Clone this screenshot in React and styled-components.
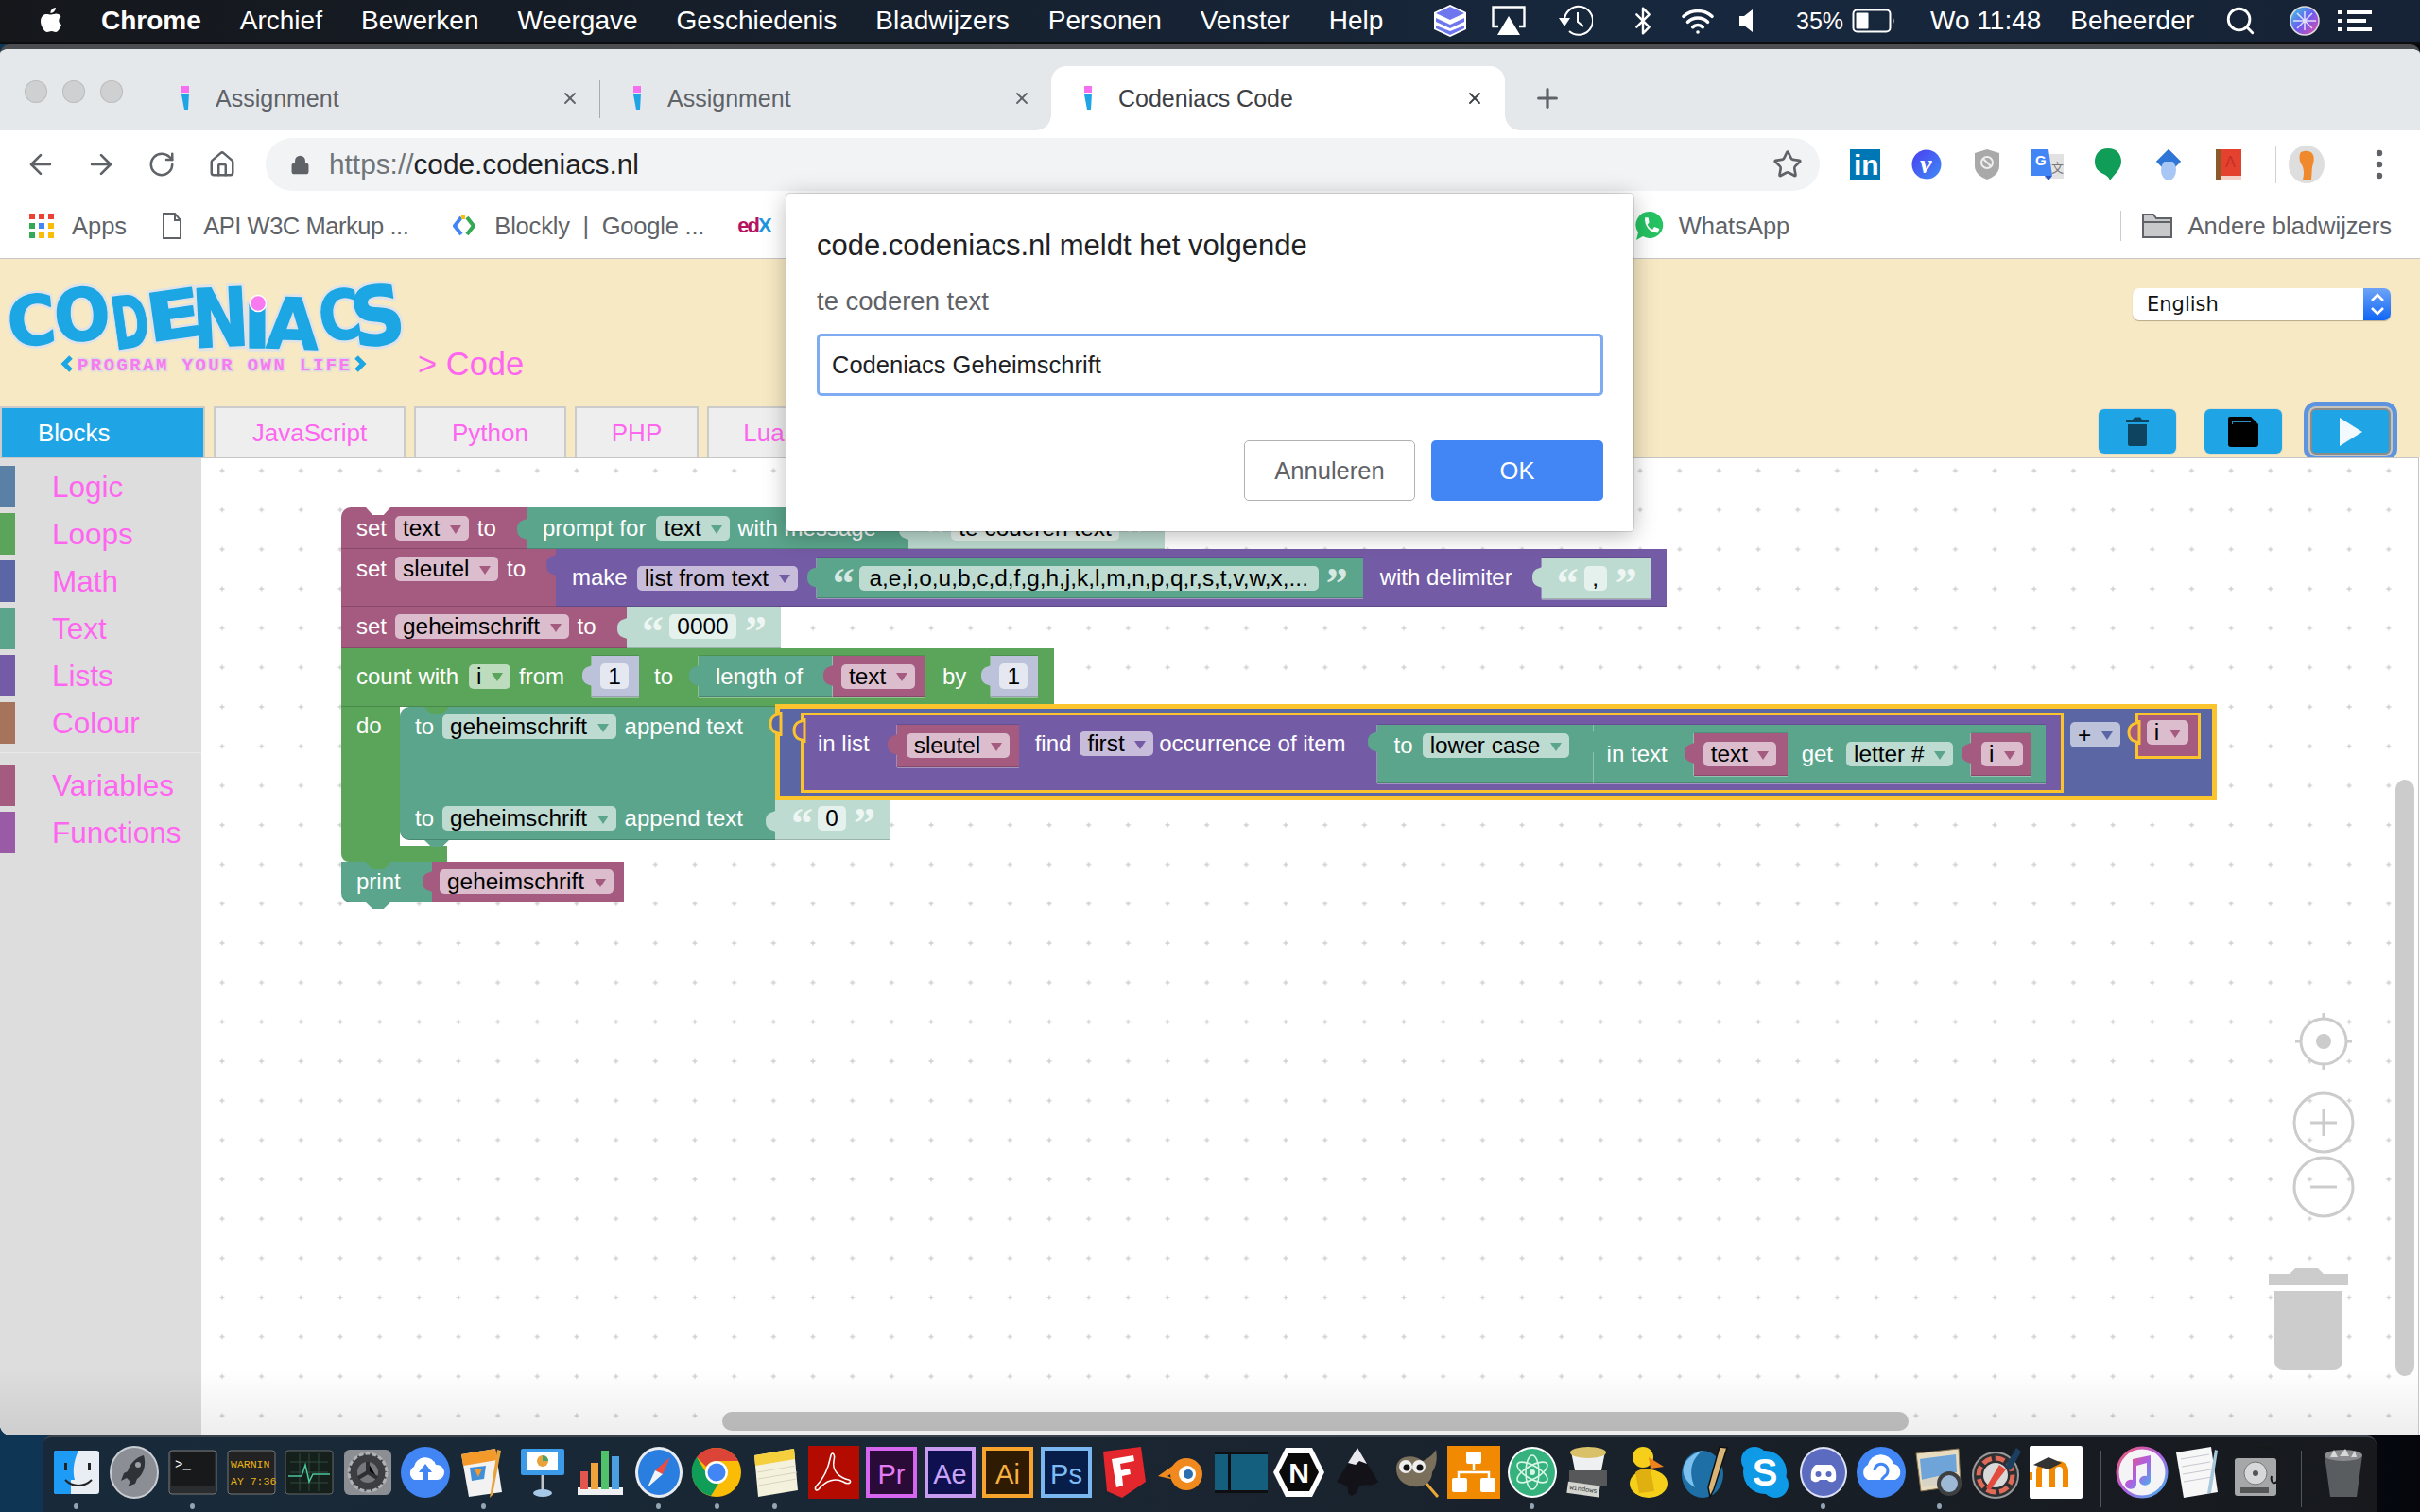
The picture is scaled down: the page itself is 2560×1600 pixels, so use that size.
import React from 'react';
import styled, { createGlobalStyle } from 'styled-components';
import { ArrowLeft, ArrowRight, RotateCw, Home, Lock, Star, Plus, X, Search, Bluetooth, Wifi } from 'lucide-react';

const PINK = '#a55b80';
const PINK_LIGHT = '#dbbdcd';
const TEXTC = '#5ba58c';
const TEXT_LIGHT = '#bddbd0';
const PURPLE = '#745ba5';
const PURPLE_LIGHT = '#c7bddb';
const LOOP = '#5ba55b';
const LOOP_LIGHT = '#bddbbd';
const MATH = '#5b67a5';
const MATH_LIGHT = '#bdc2db';
const YELLOW = '#fcc42c';
const ACCENT = '#ff66f0';
const SKY = '#1fa5e6';

const GlobalStyle = createGlobalStyle`
  html, body { margin: 0; width: 2560px; height: 1600px; overflow: hidden; }
  body { font-family: "Liberation Sans", Arial, sans-serif; }
`;

const Screen = styled.div`
  position: relative;
  width: 2560px;
  height: 1600px;
  display: flex;
  flex-direction: column;
  overflow: hidden;
  background: linear-gradient(to right, #0f3555, #10202f 50%, #05070d);
`;

/* mac menu bar */
const MenuBar = styled.div`
  flex: none;
  height: 44px;
  border-bottom: 3px solid #0c0d0f;
  display: flex;
  align-items: center;
  color: #fff;
  font-size: 28px;
  background: linear-gradient(to right, #15171b, #17283e 70%, #162235);
`;
const MenuLeft = styled.div`
  display: flex;
  align-items: center;
  gap: 41px;
  padding-left: 42px;
`;
const MenuItem = styled.span`
  font-weight: ${p => (p.$bold ? 700 : 400)};
  margin-left: ${p => p.$ml || 0}px;
  font-size: ${p => p.$size || 28}px;
  white-space: nowrap;
`;
const MenuRight = styled.div`
  margin-left: auto;
  display: flex;
  align-items: center;
  height: 44px;
  width: 1058px;
`;
const MenuSlot = styled.div`
  flex: none;
  display: flex;
  align-items: center;
  justify-content: center;
  width: ${p => p.$w}px;
  margin-left: ${p => p.$ml || 0}px;
`;

/* chrome window */
const Window = styled.div`
  flex: 1;
  min-height: 0;
  display: flex;
  flex-direction: column;
  border-top: 5px solid #4b4d50;
  border-radius: 10px 10px 0 12px;
  overflow: hidden;
  background: #fff;
`;
const TabStrip = styled.div`
  flex: none;
  height: 86px;
  background: #e5e8eb;
  display: flex;
  align-items: flex-end;
`;
const Lights = styled.div`
  display: flex;
  gap: 16px;
  padding-left: 26px;
  width: 131px;
  align-self: flex-start;
  margin-top: 33px;
`;
const Light = styled.span`
  width: 24px;
  height: 24px;
  border-radius: 50%;
  background: #cfd0d2;
  box-shadow: inset 0 0 0 1px #bcbdbf;
`;
const ChromeTab = styled.div`
  position: relative;
  box-sizing: border-box;
  flex: none;
  display: flex;
  align-items: center;
  height: 68px;
  width: ${p => p.$w}px;
  padding: 0 ${p => p.$pr}px 0 34px;
  font-size: 25px;
  color: ${p => (p.$active ? '#3c4043' : '#5f6368')};
  background: ${p => (p.$active ? '#fff' : 'transparent')};
  border-radius: 16px 16px 0 0;
  svg.close { margin-left: auto; }
  ${p => p.$sep && `
    &::after { content: ''; position: absolute; right: 0; top: 15px; height: 40px; width: 1px; background: #a9acaf; }
  `}
  ${p => p.$active && `
    &::before, &::after { content: ''; position: absolute; bottom: 0; width: 16px; height: 16px; }
    &::before { left: -16px; background: radial-gradient(circle at 0 0, transparent 15.5px, #fff 16px); }
    &::after { right: -16px; background: radial-gradient(circle at 100% 0, transparent 15.5px, #fff 16px); }
  `}
`;
const TabTitle = styled.span`
  margin-left: 27px;
  white-space: nowrap;
`;
const NewTab = styled.div`
  margin: 0 0 17px 29px;
  height: 34px;
  display: flex;
  align-items: center;
  color: #5f6368;
`;

const Toolbar = styled.div`
  flex: none;
  height: 67px;
  display: flex;
  align-items: flex-start;
  padding-left: 11px;
  background: #fff;
  color: #5f6368;
`;
const NavSlot = styled.div`
  flex: none;
  width: ${p => p.$w || 64}px;
  height: 56px;
  margin: 8px 0 0 ${p => p.$ml || 0}px;
  display: flex;
  align-items: center;
  justify-content: center;
`;
const Omnibox = styled.div`
  flex: none;
  box-sizing: border-box;
  width: 1644px;
  height: 56px;
  margin: 8px 0 0 14px;
  padding: 0 18px 0 26px;
  background: #f1f3f4;
  border-radius: 28px;
  display: flex;
  align-items: center;
  gap: 20px;
  font-size: 29.8px;
`;
const Url = styled.span`
  color: #202124;
  span { color: #70757a; }
`;
const ToolDivider = styled.span`
  flex: none;
  width: 1px;
  height: 40px;
  margin: 16px 0 0 17px;
  background: #d0d2d4;
`;

const Bookmarks = styled.div`
  flex: none;
  height: 68px;
  box-sizing: content-box;
  border-bottom: 1px solid #c6c6c6;
  display: flex;
  align-items: center;
  padding: 0 30px 0 31px;
  font-size: 25.5px;
  color: #5f6368;
  background: #fff;
`;
const Mark = styled.span`
  flex: none;
  white-space: pre;
  margin-left: ${p => p.$ml || 0}px;
  letter-spacing: ${p => p.$ls || 0}px;
  display: flex;
  align-items: center;
`;
const EdxMark = styled(Mark)`
  font-weight: 700;
  font-size: 22px;
  span:first-child { color: #b5135f; }
  span:last-child { color: #1b95e0; }
`;
const MarkDivider = styled.span`
  flex: none;
  width: 1px;
  height: 32px;
  background: #ccc;
  margin-left: auto;
`;

/* site header */
const SiteHeader = styled.div`
  flex: none;
  height: 210px;
  background: #f7e9c4;
  display: flex;
  flex-direction: column;
`;
const HeaderTop = styled.div`
  height: 156px;
  display: flex;
  align-items: flex-start;
`;
const Logo = styled.svg`
  flex: none;
  margin: 8px 0 0 8px;
  overflow: visible;
`;
const Crumb = styled.div`
  margin: 89px 0 0 4px;
  font-size: 34.5px;
  line-height: 44px;
  color: ${ACCENT};
`;
const Select = styled.div`
  box-sizing: border-box;
  margin: 31px 31px 0 auto;
  width: 273px;
  height: 34px;
  display: flex;
  align-items: center;
  justify-content: space-between;
  padding-left: 15px;
  background: #fff;
  border-radius: 7px;
  box-shadow: 0 1px 1px #b5aa8c;
  font-family: "DejaVu Sans", sans-serif;
  font-size: 21px;
  color: #111;
  overflow: hidden;
`;
const SelectArrow = styled.div`
  width: 29px;
  height: 34px;
  display: flex;
  align-items: center;
  justify-content: center;
  background: linear-gradient(#6ea4f7, #0f66f5);
`;
const TabRow = styled.div`
  height: 54px;
  display: flex;
  gap: 9px;
`;
const PageTab = styled.div`
  box-sizing: border-box;
  flex: none;
  width: ${p => p.$w}px;
  height: 54px;
  display: flex;
  align-items: center;
  justify-content: ${p => (p.$active ? 'flex-start' : 'center')};
  padding-left: ${p => (p.$active ? 38 : 0)}px;
  font-size: 26px;
  border: 2px solid #cbcbcb;
  border-bottom: none;
  color: ${p => (p.$active ? '#fff' : ACCENT)};
  background: ${p => (p.$active ? SKY : '#eeeeee')};
`;
const Actions = styled.div`
  margin: 3px 31px 0 auto;
  display: flex;
  gap: 30px;
`;
const ActionButton = styled.div`
  box-sizing: border-box;
  width: ${p => p.$w || 82}px;
  height: ${p => (p.$focus ? 49 : 47)}px;
  margin-top: ${p => (p.$focus ? -1 : 0)}px;
  display: flex;
  align-items: center;
  justify-content: center;
  background: ${SKY};
  border-radius: 6px;
  border: ${p => (p.$focus ? '2px solid #8b8b8b' : 'none')};
  box-shadow: ${p => (p.$focus ? '0 0 0 2px #c6c6c0, 0 0 0 7px #5e93e0' : '0 0 0 1px #e4dcc8')};
`;

/* blockly workspace */
const Workspace = styled.div`
  position: relative;
  flex: 1;
  min-height: 0;
  display: flex;
  background: #fff;
  border-top: 1px solid #c6c6c6;
  border-right: 1px solid #c4c4c4;
  margin-right: 1px;
  overflow: hidden;
  &::after {
    content: '';
    position: absolute;
    left: 0;
    right: 0;
    bottom: 0;
    height: 70px;
    background: linear-gradient(rgba(0, 0, 0, 0), rgba(0, 0, 0, 0.07));
    pointer-events: none;
    z-index: 6;
  }
`;
const GridLayer = styled.svg`
  position: absolute;
  inset: 0;
  width: 100%;
  height: 100%;
`;
const Flyout = styled.div`
  position: relative;
  flex: none;
  width: 213px;
  padding-top: 8px;
  background: #dddddd;
  z-index: 1;
`;
const Category = styled.div`
  height: 44px;
  margin-bottom: 6px;
  display: flex;
  align-items: center;
  font-size: 31.5px;
  color: ${ACCENT};
  &::before {
    content: '';
    width: 16px;
    height: 44px;
    margin-right: 39px;
    background: ${p => p.$color};
  }
`;
const CategorySep = styled.div`
  height: 1px;
  margin: 9px 0 12px 0;
  background: #e8e8e8;
`;

const ThumbV = styled.div`
  position: absolute;
  left: 2534px;
  top: 340px;
  width: 20px;
  height: 631px;
  border-radius: 10px;
  background: #cccccc;
`;
const ThumbH = styled.div`
  position: absolute;
  left: 764px;
  top: 1009px;
  width: 1255px;
  height: 20px;
  border-radius: 10px;
  background: #c4c4c4;
`;
const Controls = styled.svg`
  position: absolute;
  left: 2395px;
  top: 580px;
`;

/* block stack: sits on the free canvas */
const Canvas = styled.div`
  position: absolute;
  left: 361px;
  top: 52px;
  display: flex;
  flex-direction: column;
  align-items: flex-start;
  z-index: 2;
`;
const Row = styled.div`
  display: flex;
  align-items: flex-start;
  height: ${p => (p.$h ? `${p.$h}px` : 'auto')};
`;
const Block = styled.div`
  position: relative;
  flex: none;
  box-sizing: border-box;
  display: flex;
  align-items: ${p => (p.$center ? 'center' : 'flex-start')};
  gap: ${p => p.$gap ?? 9}px;
  width: ${p => p.$w}px;
  height: ${p => p.$h}px;
  margin: ${p => p.$mt || 0}px 0 0 ${p => p.$ml || 0}px;
  padding: ${p => p.$top || 0}px 0 ${p => p.$bottom || 0}px ${p => p.$left ?? 16}px;
  background: ${p => p.$bg};
  border-radius: ${p => p.$radius || '0'};
  box-shadow: inset 0 -1px 0 rgba(0, 0, 0, 0.18)${p => (p.$nested ? ', 0 1px 0 rgba(255, 255, 255, 0.35), -1px 0 0 rgba(255, 255, 255, 0.3), 0 -1px 0 rgba(0, 0, 0, 0.12)' : '')};
  ${p => p.$notch && `
    &::before {
      content: '';
      position: absolute;
      top: 0;
      left: 26px;
      width: 26px;
      height: 8px;
      background: ${p.$notch};
      clip-path: polygon(0 0, 100% 0, 72% 100%, 28% 100%);
    }
  `}
  ${p => p.$bump && `
    &::after {
      content: '';
      position: absolute;
      top: 100%;
      left: 26px;
      width: 26px;
      height: 7px;
      background: ${p.$bump};
      clip-path: polygon(0 0, 100% 0, 72% 100%, 28% 100%);
    }
  `}
`;
const TabShape = styled.svg`
  position: absolute;
  left: -12px;
  top: ${p => p.$top ?? 10}px;
  overflow: visible;
`;
const Tab = ({ color, top, stroke }) => (
  <TabShape $top={top} width="13" height="26" viewBox="0 0 13 26">
    <path d="M13 0 C13 3 9 3 7 4 C3 6 2 9 2 13 C2 17 3 20 7 22 C9 23 13 23 13 26 Z" fill={color} stroke={stroke || 'none'} strokeWidth={stroke ? 3 : 0} />
  </TabShape>
);
const Label = styled.span`
  flex: none;
  height: 26px;
  line-height: 26px;
  margin: ${p => p.$mt || 0}px 0 0 ${p => p.$ml || 0}px;
  font-size: 24px;
  color: #fff;
  white-space: pre;
`;
const Field = styled.span`
  flex: none;
  box-sizing: border-box;
  display: flex;
  align-items: center;
  justify-content: ${p => (p.$w ? 'center' : 'flex-start')};
  gap: 10.5px;
  height: ${p => p.$h || 26}px;
  width: ${p => (p.$w ? `${p.$w}px` : 'auto')};
  margin: ${p => p.$mt || 0}px 0 0 ${p => p.$ml || 0}px;
  padding: ${p => (p.$w ? '0' : '0 8px')};
  border-radius: 5px;
  font-size: 24.4px;
  color: #000;
  white-space: nowrap;
  overflow: hidden;
  background: ${p => p.$bg};
  ${p => p.$arrow && `
    &::after {
      content: '';
      flex: none;
      width: 0;
      height: 0;
      border-left: 6.5px solid transparent;
      border-right: 6.5px solid transparent;
      border-top: 9px solid ${p.$arrow};
      margin-top: 2px;
    }
  `}
`;
const Quote = styled.span`
  flex: none;
  width: 20px;
  height: 26px;
  overflow: visible;
  font-family: "Liberation Serif", serif;
  font-weight: 700;
  font-size: 46px;
  line-height: 38px;
  color: rgba(255, 255, 255, 0.75);
`;
const Foot = styled.div`
  width: 112px;
  height: 17px;
  background: ${LOOP};
  border-radius: 0 0 0 8px;
`;
const Rail = styled.div`
  flex: none;
  box-sizing: border-box;
  width: 62px;
  height: 147px;
  padding: 7px 0 0 16px;
  background: ${LOOP};
`;
const Selected = styled.div`
  position: relative;
  flex: none;
  box-sizing: border-box;
  display: flex;
  align-items: flex-start;
  gap: 7px;
  width: 1525px;
  height: 102px;
  margin-top: -3px;
  padding-left: 22px;
  border: 5px solid ${YELLOW};
  background: ${MATH};
  z-index: 3;
`;
const Outlined = styled.div`
  position: relative;
  flex: none;
  box-sizing: border-box;
  display: flex;
  align-items: flex-start;
  width: ${p => p.$w}px;
  height: ${p => p.$h}px;
  margin: 4px 0 0 ${p => p.$ml || 0}px;
  padding: ${p => p.$top}px 0 0 ${p => p.$left}px;
  background: ${p => p.$bg};
  border: 3px solid ${YELLOW};
`;

/* dialog over the page */
const Dialog = styled.div`
  position: absolute;
  left: 832px;
  top: 205px;
  box-sizing: border-box;
  width: 896px;
  height: 357px;
  padding: 36px 32px 0 32px;
  background: #fff;
  border-radius: 4px;
  box-shadow: 0 0 0 1px rgba(0, 0, 0, 0.12), 0 4px 24px rgba(0, 0, 0, 0.28);
  z-index: 20;
`;
const DialogTitle = styled.div`
  font-size: 31px;
  line-height: 38px;
  color: #202124;
`;
const DialogText = styled.div`
  margin-top: 23px;
  font-size: 27.5px;
  line-height: 34px;
  color: #5f6368;
`;
const DialogInput = styled.div`
  box-sizing: border-box;
  margin-top: 17px;
  height: 66px;
  padding-left: 13px;
  display: flex;
  align-items: center;
  border: 3px solid #7fabf3;
  border-radius: 5px;
  font-size: 25.5px;
  color: #202124;
`;
const DialogButtons = styled.div`
  margin-top: 47px;
  display: flex;
  justify-content: flex-end;
  gap: 17px;
`;
const DialogButton = styled.div`
  box-sizing: border-box;
  width: ${p => p.$w}px;
  height: 64px;
  display: flex;
  align-items: center;
  justify-content: center;
  font-size: 25.5px;
  border-radius: 5px;
  color: ${p => (p.$primary ? '#fff' : '#5f6368')};
  background: ${p => (p.$primary ? '#4285f4' : '#fff')};
  border: ${p => (p.$primary ? 'none' : '1px solid #b2b2b2')};
`;

/* dock */
const Dock = styled.div`
  flex: none;
  height: 81px;
  margin: 0 46px 0 45px;
  padding-left: 5px;
  display: flex;
  background: linear-gradient(to right, #182a3a, #1a2531 50%, #17191d);
  border-top: 2px solid #3b444d;
  border-radius: 10px 10px 0 0;
  box-sizing: border-box;
`;
const DockSlot = styled.div`
  position: relative;
  flex: none;
  width: 61.6px;
  display: flex;
  justify-content: center;
  padding-top: 9px;
  ${p => p.$running && `
    &::after {
      content: '';
      position: absolute;
      left: 28px;
      top: 70px;
      width: 5px;
      height: 6px;
      border-radius: 50%;
      background: #93a4b4;
    }
  `}
`;
const DockDivider = styled.div`
  flex: none;
  width: 1px;
  height: 60px;
  margin: 14px ${p => p.$mr}px 0 ${p => p.$ml}px;
  background: #4e5660;
`;

const Favicon = () => (
  <svg width="10" height="26" viewBox="0 0 10 26">
    <rect x="1" y="0" width="8" height="7" fill="#f56ff0" />
    <path d="M1 9 L9 8 L8 25 L4 25 Z" fill="#1fa5e6" />
  </svg>
);

const AppsGrid = () => (
  <svg width="26" height="26" viewBox="0 0 26 26">
    {[['#ea4335', '#ea4335', '#ea4335'], ['#34a853', '#4285f4', '#fbbc05'], ['#34a853', '#fbbc05', '#fbbc05']].map((row, y) =>
      row.map((c, x) => <rect key={`${x}${y}`} x={x * 10} y={y * 10} width="6" height="6" fill={c} />)
    )}
  </svg>
);

const Extensions = [
  <svg width="34" height="34" viewBox="0 0 34 34"><rect width="32" height="32" y="1" fill="#0077b5" /><text x="4" y="28" fontFamily="Liberation Sans" fontWeight="700" fontSize="30" fill="#fff">in</text></svg>,
  <svg width="32" height="32" viewBox="0 0 32 32"><defs><linearGradient id="vg" x1="0" y1="0" x2="1" y2="1"><stop offset="0" stopColor="#4a3df0" /><stop offset="1" stopColor="#3f8cf5" /></linearGradient></defs><circle cx="16" cy="16" r="15.5" fill="url(#vg)" /><text x="9" y="25" fontFamily="Liberation Serif" fontStyle="italic" fontWeight="700" fontSize="28" fill="#fff">v</text></svg>,
  <svg width="28" height="34" viewBox="0 0 28 34"><path d="M14 1 L27 5 V19 C27 26 20 31 14 33 C8 31 1 26 1 19 V5 Z" fill="#a9a9a9" /><circle cx="14" cy="15" r="6" fill="none" stroke="#eee" strokeWidth="2" /><path d="M10 11 L18 19" stroke="#eee" strokeWidth="2" /></svg>,
  <svg width="34" height="34" viewBox="0 0 34 34"><rect x="14" y="6" width="20" height="26" fill="#e2e2e2" /><path d="M0 1 H18 L22 29 H0 Z" fill="#4285f4" /><path d="M14 29 H22 L18 34 Z" fill="#2a56c6" /><text x="4" y="18" fontFamily="Liberation Sans" fontWeight="700" fontSize="15" fill="#fff">G</text><text x="21" y="25" fontFamily="Noto Sans CJK SC" fontSize="13" fill="#777">文</text></svg>,
  <svg width="30" height="34" viewBox="0 0 30 34"><path d="M15 0 C24 0 29 6 29 14 C29 22 22 27 17 34 C16 30 12 28 8 26 C3 23 1 19 1 14 C1 6 6 0 15 0 Z" fill="#0f9d58" /></svg>,
  <svg width="30" height="34" viewBox="0 0 30 34"><path d="M15 1 L28 14 L15 27 L2 14 Z" fill="#2f76d6" /><ellipse cx="15" cy="23" rx="8" ry="11" fill="#a8c7f5" /><path d="M15 1 L28 14 L21 14 L9 14 L2 14 Z" fill="#2f76d6" /></svg>,
  <svg width="28" height="34" viewBox="0 0 28 34"><rect x="0" y="1" width="6" height="32" fill="#8a5a2a" /><rect x="5" y="1" width="22" height="28" fill="#e5412f" /><rect x="5" y="29" width="22" height="4" fill="#f3d0c8" /><text x="10" y="20" fontFamily="Liberation Sans" fontSize="16" fill="#c12f21">A</text></svg>
];

const D = ({ children }) => <svg width="56" height="56" viewBox="0 0 56 56">{children}</svg>;
const font = { fontFamily: 'Liberation Sans', fontWeight: 700 };

const AdobeTile = ({ bg, frame, ink, label }) => (
  <D>
    <rect x="1" y="1" width="54" height="54" fill={frame} />
    <rect x="5" y="5" width="46" height="46" fill={bg} />
    <text x="28" y="40" textAnchor="middle" fontFamily="Liberation Sans" fontSize="29" fill={ink}>{label}</text>
  </D>
);

const dockApps = [
  { running: true, icon: <D><rect x="4" y="5" width="48" height="46" rx="3" fill="#e9eef5" /><path d="M4 8 a3 3 0 0 1 3 -3 H30 C24 18 24 28 26 36 H22 V51 H7 a3 3 0 0 1 -3 -3 Z" fill="#1e9bf5" /><path d="M16 36 C24 44 36 44 44 36" fill="none" stroke="#222" strokeWidth="2" /><rect x="15" y="18" width="3" height="8" fill="#222" /><rect x="40" y="18" width="3" height="8" fill="#222" /></D> },
  { icon: <D><ellipse cx="28" cy="28" rx="25" ry="27" fill="#8b8f95" stroke="#c9ccd0" strokeWidth="2" /><path d="M38 10 C30 12 24 18 21 27 L17 29 L14 37 L20 34 L24 38 L21 43 L29 40 L31 35 C38 30 41 20 38 10 Z" fill="#2f3236" /><circle cx="32" cy="20" r="3" fill="#9aa0a6" /></D> },
  { running: true, icon: <D><rect x="3" y="5" width="50" height="46" rx="3" fill="#2a2d30" stroke="#777" /><rect x="5" y="7" width="46" height="36" fill="#17191b" /><text x="9" y="24" fontFamily="Liberation Mono" fontSize="14" fill="#fff">&gt;_</text></D> },
  { icon: <D><rect x="3" y="5" width="50" height="46" rx="3" fill="#222" stroke="#777" /><text x="6" y="23" fontFamily="Liberation Mono" fontSize="11.5" fill="#e6b416">WARNIN</text><text x="6" y="41" fontFamily="Liberation Mono" fontSize="11.5" fill="#e6b416">AY 7:36</text></D> },
  { icon: <D><rect x="3" y="5" width="50" height="46" rx="3" fill="#15201c" stroke="#666" /><path d="M8 17 H48 M8 28 H48 M8 39 H48 M18 8 V48 M28 8 V48 M38 8 V48" stroke="#2f4a3e" /><path d="M6 32 H20 L24 20 L28 38 L32 30 H50" fill="none" stroke="#49c59a" strokeWidth="1.5" /></D> },
  { icon: <D><rect x="3" y="4" width="50" height="48" rx="6" fill="#8b8e92" /><circle cx="28" cy="28" r="20" fill="#3c3e41" stroke="#b0b2b4" strokeWidth="3" strokeDasharray="5 2" /><circle cx="28" cy="28" r="11" fill="#75787c" /><path d="M28 17 V28 L38 34 M28 28 L18 34" stroke="#2d2f31" strokeWidth="4" /></D> },
  { icon: <D><ellipse cx="28" cy="28" rx="26" ry="27" fill="#4285f4" /><path d="M16 36 a8 8 0 0 1 0 -14 a12 12 0 0 1 23 -2 a8 8 0 0 1 2 16 Z" fill="#fff" /><path d="M28 19 L35 28 H31 V36 H25 V28 H21 Z" fill="#4285f4" /></D> },
  { running: true, icon: <D><path d="M4 9 L40 3 L47 49 L12 54 Z" fill="#f2f2f2" /><path d="M4 9 L40 3 L42 15 L6 21 Z" fill="#f39a2b" /><path d="M13 23 L30 21 L28 35 L15 37 Z" fill="#3f8ed8" /><path d="M18 25 L26 24 L22 33 Z" fill="#f39a2b" /><path d="M42 4 L46 5 L37 52 L34 55 Z" fill="#e9a23b" /></D> },
  { icon: <D><rect x="5" y="3" width="46" height="28" rx="2" fill="#3c9be8" /><rect x="12" y="7" width="32" height="19" fill="#fff" /><circle cx="28" cy="16" r="6" fill="#e8a23b" /><path d="M28 16 V10 A6 6 0 0 1 34 16 Z" fill="#4ca26b" /><rect x="26.5" y="31" width="3" height="19" fill="#c2c6ca" /><ellipse cx="28" cy="50" rx="10" ry="4" fill="#a6c8e6" /></D> },
  { icon: <D><rect x="4" y="44" width="48" height="8" fill="#eef0f2" /><rect x="7" y="27" width="8" height="19" fill="#e2564d" /><rect x="18" y="18" width="8" height="28" fill="#f0a23b" /><rect x="29" y="5" width="8" height="41" fill="#4fc26a" /><rect x="40" y="11" width="8" height="35" fill="#4aa0e0" /></D> },
  { running: true, icon: <D><ellipse cx="28" cy="28" rx="25" ry="27" fill="#e8ecf0" /><ellipse cx="28" cy="28" rx="22" ry="24" fill="#2a7ee0" /><path d="M40 12 L24 26 L32 30 Z" fill="#f04b3e" /><path d="M16 44 L32 30 L24 26 Z" fill="#f2f4f6" /></D> },
  { running: true, icon: <D><circle cx="28" cy="28" r="26" fill="#fbbc05" /><path d="M28 2 A26 26 0 0 1 51 16 H28 A12 12 0 0 0 17 22 L7 12 A26 26 0 0 1 28 2 Z" fill="#db4437" /><path d="M7 12 L19 32 A12 12 0 0 0 30 40 L22 53 A26 26 0 0 1 7 12 Z" fill="#0f9d58" /><circle cx="28" cy="28" r="12" fill="#fff" /><circle cx="28" cy="28" r="9.5" fill="#4285f4" /></D> },
  { running: true, icon: <D><path d="M6 10 L48 3 L52 47 L10 54 Z" fill="#f4f1dc" /><path d="M6 10 L48 3 L49 14 L7 21 Z" fill="#f5cf3c" /><path d="M9 28 L50 21 M10 35 L51 28 M10 42 L51 35" stroke="#d8d5c0" /></D> },
  { icon: <D><rect x="1" y="0" width="54" height="56" fill="#b30b00" /><path d="M10 42 C22 30 24 14 25 10 C26 6 30 8 28 16 C26 26 34 34 44 36 C48 38 44 42 38 38 C30 34 20 36 12 46 C9 49 7 45 10 42 Z" fill="none" stroke="#fff" strokeWidth="1.6" /></D> },
  { icon: <AdobeTile bg="#2a0a36" frame="#d666f0" ink="#e27cf5" label="Pr" /> },
  { icon: <AdobeTile bg="#0e1050" frame="#c79bf0" ink="#c9a4f7" label="Ae" /> },
  { icon: <AdobeTile bg="#2f1a02" frame="#f7a32c" ink="#f7b13e" label="Ai" /> },
  { icon: <AdobeTile bg="#071d4a" frame="#7ab6f0" ink="#7ebcf5" label="Ps" /> },
  { icon: <D><path d="M6 6 L46 1 L51 38 L26 55 L10 48 Z" fill="#e3272c" /><path d="M15 14 L38 10 L39 16 L24 19 L25 26 L34 24 L35 30 L26 32 L27 42 L20 44 Z" fill="#fff" /></D> },
  { icon: <D><circle cx="32" cy="30" r="17" fill="#f08a1f" /><circle cx="33" cy="30" r="9" fill="#fff" /><circle cx="34" cy="30" r="5" fill="#2b6fb0" /><path d="M2 32 L22 18 L24 24 L12 32 L20 36 Z" fill="#f08a1f" /></D> },
  { icon: <D><rect x="0" y="6" width="56" height="44" fill="#135f7d" /><rect x="14" y="6" width="3" height="44" fill="#0d0f12" /><rect x="0" y="6" width="56" height="3" fill="#0d0f12" /><rect x="0" y="47" width="56" height="3" fill="#0d0f12" /></D> },
  { icon: <D><path d="M14 2 H42 L55 28 L42 54 H14 L1 28 Z" fill="#fff" /><path d="M17 8 H39 L49 28 L39 48 H17 L7 28 Z" fill="#0a0a0a" /><text x="28" y="39" textAnchor="middle" {...font} fontSize="30" fill="#fff">N</text></D> },
  { icon: <D><path d="M28 2 L50 38 C44 44 36 40 30 42 C28 50 24 54 20 52 C16 50 20 44 16 42 L6 38 Z" fill="#121218" /><path d="M28 2 L38 19 L30 16 L26 20 L18 18 Z" fill="#e8e8ee" /></D> },
  { icon: <D><path d="M8 24 C8 10 26 8 36 16 C44 12 48 8 50 4 C52 14 50 22 46 28 C46 40 34 46 22 42 C14 40 8 34 8 24 Z" fill="#7a6f5a" /><circle cx="18" cy="22" r="7" fill="#eee" /><circle cx="32" cy="22" r="7" fill="#eee" /><circle cx="19" cy="23" r="3.5" fill="#111" /><circle cx="33" cy="23" r="3.5" fill="#111" /><path d="M40 40 L52 54" stroke="#e8a83b" strokeWidth="3" /></D> },
  { icon: <D><rect x="0" y="0" width="56" height="56" fill="#f18a00" /><path d="M28 18 V26 M12 36 V28 H44 V36" fill="none" stroke="#fff" strokeWidth="2.5" /><rect x="20" y="6" width="16" height="13" rx="2" fill="#fff" /><rect x="5" y="34" width="16" height="15" rx="2" fill="#fff" /><rect x="35" y="34" width="16" height="15" rx="2" fill="#fff" /></D> },
  { running: true, icon: <D><ellipse cx="28" cy="28" rx="26" ry="27" fill="#fff" /><ellipse cx="28" cy="28" rx="24" ry="25" fill="#35b27d" /><g fill="none" stroke="#d8f5e6" strokeWidth="1.6"><ellipse cx="28" cy="28" rx="18" ry="7" transform="rotate(30 28 28)" /><ellipse cx="28" cy="28" rx="18" ry="7" transform="rotate(-30 28 28)" /><ellipse cx="28" cy="28" rx="18" ry="7" transform="rotate(90 28 28)" /></g><circle cx="28" cy="28" r="3" fill="#d8f5e6" /></D> },
  { icon: <D><path d="M8 6 H44 L40 26 H12 Z" fill="#eef0f2" /><ellipse cx="26" cy="7" rx="19" ry="6" fill="#d8c169" /><rect x="6" y="26" width="40" height="16" fill="#56585a" /><rect x="4" y="40" width="34" height="12" fill="#d5d5d0" transform="rotate(8 20 46)" /><text x="21" y="48" textAnchor="middle" fontFamily="Liberation Mono" fontSize="7" fill="#333" transform="rotate(8 20 46)">windows</text></D> },
  { icon: <D><ellipse cx="28" cy="40" rx="20" ry="15" fill="#f5cf1a" /><circle cx="22" cy="12" r="11" fill="#f5cf1a" /><path d="M28 12 L44 22 L30 24 Z" fill="#f0821e" /><path d="M14 28 C18 24 26 24 30 24 L34 48 L18 50 Z" fill="#e0b010" /></D> },
  { icon: <D><ellipse cx="24" cy="30" rx="22" ry="25" fill="#1d6fa5" /><path d="M24 5 C10 16 10 30 16 44 C6 38 2 30 4 22 C6 14 14 8 24 5 Z" fill="#7bc0ee" /><path d="M50 2 L36 46 L32 54 L30 44 L42 1 Z" fill="#d8b477" stroke="#111" strokeWidth="1.5" /></D> },
  { icon: <D><circle cx="17" cy="15" r="14" fill="#0f9ae8" /><circle cx="39" cy="41" r="14" fill="#0f9ae8" /><circle cx="28" cy="28" r="23" fill="#0f9ae8" /><text x="28" y="42" textAnchor="middle" {...font} fontSize="40" fill="#fff">S</text></D> },
  { running: true, icon: <D><ellipse cx="28" cy="28" rx="25" ry="27" fill="#dde1f5" /><ellipse cx="28" cy="28" rx="23" ry="25" fill="#5b6cc0" /><path d="M15 36 C14 28 16 22 20 20 H36 C40 22 42 28 41 36 C37 40 33 38 32 36 H24 C23 38 19 40 15 36 Z" fill="#fff" /><circle cx="22.5" cy="30" r="3" fill="#5b6cc0" /><circle cx="33.5" cy="30" r="3" fill="#5b6cc0" /></D> },
  { icon: <D><ellipse cx="28" cy="28" rx="26" ry="27" fill="#4285f4" /><path d="M14 36 a9 9 0 0 1 0 -16 a14 14 0 0 1 27 -1 a9 9 0 0 1 2 17 Z" fill="#fff" /><path d="M21 26 a7 7 0 1 1 11 6 l-3 3 v4" fill="none" stroke="#4285f4" strokeWidth="3" /></D> },
  { running: true, icon: <D><path d="M3 8 L48 3 L50 42 L8 48 Z" fill="#e8dcc0" stroke="#8a7350" /><path d="M7 14 L45 9 L46 28 L9 36 Z" fill="#6fa4d8" /><path d="M9 36 L46 28 L46 38 L10 44 Z" fill="#d7d4c5" /><circle cx="38" cy="40" r="13" fill="#3d3f41" /><circle cx="38" cy="40" r="9" fill="#9db9d6" /></D> },
  { icon: <D><circle cx="26" cy="31" r="24" fill="#2d2f32" stroke="#999" strokeWidth="2" /><circle cx="26" cy="31" r="18" fill="none" stroke="#e06a58" strokeWidth="5" strokeDasharray="10 4" /><circle cx="26" cy="31" r="13" fill="#d9d9d9" /><path d="M16 44 L30 20 L37 25 L20 47 Z" fill="#e34b3e" /><path d="M36 22 L48 2 L53 6 L42 26 Z" fill="#1d3f5f" /></D> },
  { icon: <D><rect width="56" height="56" rx="2" fill="#fff" /><path d="M10 44 V26 a7 7 0 0 1 14 0 V44 M24 26 a7 7 0 0 1 14 0 V44" fill="none" stroke="#f18a00" strokeWidth="6" /><path d="M4 20 L20 12 L34 18 L20 25 Z" fill="#333" /><path d="M1 36 V28" stroke="#f18a00" strokeWidth="4" /></D> },
  { divider: { ml: 16, mr: 12 } },
  { icon: <D><circle cx="28" cy="28" r="26" fill="#f4f4f6" stroke="url(#ring)" strokeWidth="3" /><defs><linearGradient id="ring" x1="0" y1="0" x2="1" y2="1"><stop offset="0" stopColor="#f0556e" /><stop offset="0.5" stopColor="#b05ee0" /><stop offset="1" stopColor="#3fb8f0" /></linearGradient></defs><path d="M37 10 L37 36 A6 5 0 1 1 33 32 V18 L22 21 V40 A6 5 0 1 1 18 36 V14 Z" fill="url(#ring)" /></D> },
  { icon: <D><path d="M3 7 L40 1 L47 49 L11 55 Z" fill="#f7f7f7" /><path d="M8 14 L38 9 M9 22 L39 17 M10 30 L40 25 M11 38 L41 33" stroke="#c7c7cf" /><path d="M44 4 L47 5 L40 50 L36 50 Z" fill="#a8c8dc" /></D> },
  { icon: <D><rect x="3" y="13" width="44" height="40" rx="3" fill="#a5a7a9" /><circle cx="25" cy="29" r="12" fill="#d6d8da" stroke="#777" /><circle cx="25" cy="29" r="3" fill="#555" /><rect x="9" y="44" width="30" height="6" fill="#333" opacity="0.7" /><path d="M24 1 C44 -1 52 8 50 30 C48 44 40 40 42 32" fill="none" stroke="#17191b" strokeWidth="2" /></D> },
  { divider: { ml: 14, mr: 14 } },
  { icon: <D><path d="M8 10 L48 10 L42 54 H14 Z" fill="#5a5d60" /><ellipse cx="28" cy="10" rx="20" ry="6" fill="#8a8c8f" /><path d="M14 12 L18 4 L22 12 M24 11 L30 3 L34 11 M36 12 L40 5 L42 12" fill="#d8d8d8" /></D> }
];

const logoLetters = [
  { c: 'C', x: 2, y: 85, r: -5, sx: 0.92, sy: 0.95 },
  { c: 'O', x: 51, y: 80, r: -4, sx: 0.92, sy: 1.0 },
  { c: 'D', x: 114, y: 88, r: -8, sx: 0.62, sy: 1.0 },
  { c: 'E', x: 150, y: 80, r: -8, sx: 1.14, sy: 0.92 },
  { c: 'N', x: 197, y: 86, r: -3, sx: 0.94, sy: 1.12 },
  { c: 'ı', x: 249, y: 86, r: 0, sx: 1.15, sy: 1.1 },
  { c: 'A', x: 273, y: 86, r: 2, sx: 0.94, sy: 0.98 },
  { c: 'C', x: 333, y: 80, r: -8, sx: 0.8, sy: 0.95 },
  { c: 'S', x: 368, y: 86, r: -8, sx: 1.02, sy: 1.12 }
];

const SiteLogo = () => (
  <Logo width="430" height="130" viewBox="0 0 430 130">
    {logoLetters.map(l => (
      <text
        key={`back${l.c}${l.x}`}
        transform={`translate(${l.x} ${l.y}) rotate(${l.r}) scale(${l.sx} ${l.sy})`}
        fontFamily="DejaVu Sans"
        fontWeight="700"
        fontSize="76"
        fill="#dfe3e8"
        stroke="#dfe3e8"
        strokeWidth="7"
        strokeLinejoin="round"
      >{l.c}</text>
    ))}
    {logoLetters.map(l => (
      <text
        key={`front${l.c}${l.x}`}
        transform={`translate(${l.x} ${l.y}) rotate(${l.r}) scale(${l.sx} ${l.sy})`}
        fontFamily="DejaVu Sans"
        fontWeight="700"
        fontSize="76"
        fill="#1ca6e3"
        stroke="#1ca6e3"
        strokeWidth="1.5"
        strokeLinejoin="round"
      >{l.c}</text>
    ))}
    <circle cx="265" cy="39" r="8.5" fill="#f97af0" stroke="#fff" strokeWidth="1.5" />
    <path d="M67 96 L60 103 L67 110" fill="none" stroke="#1ca6e3" strokeWidth="5" />
    <path d="M369 96 L376 103 L369 110" fill="none" stroke="#1ca6e3" strokeWidth="5" />
    <text
      x="74"
      y="110"
      textLength="288"
      lengthAdjust="spacing"
      fontFamily="Liberation Mono"
      fontWeight="700"
      fontSize="19"
      fill="#f97af0"
      stroke="#dcdcdc"
      strokeWidth="3"
      paintOrder="stroke"
    >PROGRAM YOUR OWN LIFE</text>
  </Logo>
);

const Grid = () => (
  <GridLayer>
    <defs>
      <pattern id="crosses" x="26.6" y="-28.7" width="41.67" height="41.67" patternUnits="userSpaceOnUse">
        <path d="M-2.5 0 H2.5 M0 -2.5 V2.5 M39.17 0 H44 M41.67 -2.5 V2.5 M-2.5 41.67 H2.5 M0 39.17 V44 M39.17 41.67 H44 M41.67 39.17 V44" stroke="#cfcfcf" strokeWidth="1.4" />
      </pattern>
    </defs>
    <rect width="100%" height="100%" fill="url(#crosses)" />
  </GridLayer>
);

const QuotedValue = ({ text, w, fieldBg = '#e5f1ec' }) => (
  <>
    <Quote>“</Quote>
    <Field $bg={fieldBg} $w={w}>{text}</Field>
    <Quote>”</Quote>
  </>
);

const VarField = ({ children, ...rest }) => <Field $bg={PINK_LIGHT} $arrow={PINK} {...rest}>{children}</Field>;
const TextDrop = ({ children, ...rest }) => <Field $bg={TEXT_LIGHT} $arrow={TEXTC} {...rest}>{children}</Field>;

const BlockStack = () => (
  <Canvas>
    <Row>
      <Block $bg={PINK} $w={196} $h={44} $top={9} $radius="10px 0 0 0" $notch="#fff" $bump={PINK}>
        <Label>set</Label><VarField>text</VarField><Label>to</Label>
      </Block>
      <Block $bg={TEXTC} $w={404} $h={44} $top={9} $left={17} $gap={11}>
        <Tab color={TEXTC} />
        <Label>prompt for</Label><TextDrop>text</TextDrop><Label $ml={-3}>with message</Label>
      </Block>
      <Block $bg={TEXT_LIGHT} $w={271} $h={44} $top={9} $left={17} $gap={8}>
        <Tab color={TEXT_LIGHT} />
        <QuotedValue text="te coderen text" w={178} />
      </Block>
    </Row>
    <Row>
      <Block $bg={PINK} $w={227} $h={61} $top={8} $bump={PINK}>
        <Label>set</Label><VarField>sleutel</VarField><Label>to</Label>
      </Block>
      <Block $bg={PURPLE} $w={1175} $h={61} $center $left={17} $gap={10}>
        <Tab color={PURPLE} top={4} />
        <Label $mt={-2}>make</Label>
        <Field $bg={PURPLE_LIGHT} $arrow={PURPLE}>list from text</Field>
        <Block $bg={TEXTC} $w={578} $h={43} $center $left={17} $gap={8} $ml={10} $nested>
          <Tab color={TEXTC} top={8} />
          <QuotedValue text="a,e,i,o,u,b,c,d,f,g,h,j,k,l,m,n,p,q,r,s,t,v,w,x,..." w={486} fieldBg={TEXT_LIGHT} />
        </Block>
        <Label $ml={8} $mt={-2}>with delimiter</Label>
        <Block $bg={TEXT_LIGHT} $w={116} $h={44} $center $gap={9} $ml={21} $nested>
          <Tab color={TEXT_LIGHT} top={8} />
          <QuotedValue text="," w={24} />
        </Block>
      </Block>
    </Row>
    <Row>
      <Block $bg={PINK} $w={302} $h={44} $top={8} $bump={PINK}>
        <Label>set</Label><VarField>geheimschrift</VarField><Label>to</Label>
      </Block>
      <Block $bg={TEXT_LIGHT} $w={163} $h={44} $top={8} $gap={9}>
        <Tab color={TEXT_LIGHT} />
        <QuotedValue text="0000" w={71} />
      </Block>
    </Row>
    <Block $bg={LOOP} $w={754} $h={62} $center $gap={11} $bottom={3}>
      <Label>count with</Label>
      <Field $bg={LOOP_LIGHT} $arrow={LOOP}>i</Field>
      <Label $ml={-2}>from</Label>
      <Block $bg={MATH_LIGHT} $w={50} $h={44} $center $left={9} $ml={18} $nested>
        <Tab color={MATH_LIGHT} top={8} />
        <Field $bg="#e5e7f1" $w={30} $h={27}>1</Field>
      </Block>
      <Label $ml={5}>to</Label>
      <Row>
        <Block $bg={TEXTC} $w={142} $h={44} $center $left={18} $ml={16} $nested>
          <Tab color={TEXTC} top={8} />
          <Label>length of</Label>
        </Block>
        <Block $bg={PINK} $w={98} $h={44} $center $left={9} $nested>
          <Tab color={PINK} top={8} />
          <VarField>text</VarField>
        </Block>
      </Row>
      <Label $ml={7}>by</Label>
      <Block $bg={MATH_LIGHT} $w={50} $h={44} $center $left={9} $ml={15} $nested>
        <Tab color={MATH_LIGHT} top={8} />
        <Field $bg="#e5e7f1" $w={30} $h={27}>1</Field>
      </Block>
    </Block>
    <Row>
      <Rail><Label>do</Label></Rail>
      <div>
        <Row $h={98}>
          <Block $bg={TEXTC} $w={397} $h={98} $top={8} $radius="10px 0 0 0" $notch={LOOP} $bump={TEXTC}>
            <Label>to</Label><TextDrop>geheimschrift</TextDrop><Label>append text</Label>
          </Block>
          <Selected>
            <Tab color={MATH} stroke={YELLOW} top={3} />
            <Outlined $bg={PURPLE} $w={1336} $h={85} $top={10} $left={15}>
              <Tab color={PURPLE} stroke={YELLOW} top={3} />
              <Label $mt={7}>in list</Label>
              <Block $bg={PINK} $w={129} $h={45} $top={9} $left={10} $ml={29} $nested>
                <Tab color={PINK} top={8} />
                <VarField>sleutel</VarField>
              </Block>
              <Label $mt={7} $ml={17}>find</Label>
              <Field $bg={PURPLE_LIGHT} $arrow={PURPLE} $mt={7} $ml={9}>first</Field>
              <Label $mt={7} $ml={6}>occurrence of item</Label>
              <Block $bg={TEXTC} $w={229} $h={62} $top={9} $left={18} $gap={10} $ml={33} $nested>
                <Tab color={TEXTC} top={5} />
                <Label>to</Label><TextDrop>lower case</TextDrop>
              </Block>
              <Block $bg={TEXTC} $w={478} $h={62} $center $left={14} $gap={9} $nested>
                <Tab color={TEXTC} top={5} />
                <Label>in text</Label>
                <Block $bg={PINK} $w={99} $h={45} $center $left={10} $ml={19} $nested>
                  <Tab color={PINK} top={8} />
                  <VarField>text</VarField>
                </Block>
                <Label $ml={6}>get</Label>
                <TextDrop $ml={5}>letter #</TextDrop>
                <Block $bg={PINK} $w={64} $h={45} $center $left={11} $ml={10} $nested>
                  <Tab color={PINK} top={8} />
                  <VarField>i</VarField>
                </Block>
              </Block>
            </Outlined>
            <Field $bg={MATH_LIGHT} $arrow={MATH} $h={27} $mt={14}>+</Field>
            <Outlined $bg={PINK} $w={69} $h={49} $top={5} $left={9} $ml={9}>
              <Tab color={PINK} stroke={YELLOW} top={5} />
              <VarField>i</VarField>
            </Outlined>
          </Selected>
        </Row>
        <Row $h={49}>
          <Block $bg={TEXTC} $w={397} $h={43} $top={7} $radius="0 0 0 10px" $notch={TEXTC} $bump={TEXTC}>
            <Label>to</Label><TextDrop>geheimschrift</TextDrop><Label>append text</Label>
          </Block>
          <Block $bg={TEXT_LIGHT} $w={122} $h={43} $top={7} $left={17} $gap={8}>
            <Tab color={TEXT_LIGHT} />
            <QuotedValue text="0" w={30} />
          </Block>
        </Row>
      </div>
    </Row>
    <Foot />
    <Row>
      <Block $bg={TEXTC} $w={96} $h={43} $top={8} $radius="0 0 0 10px" $notch={LOOP} $bump={TEXTC}>
        <Label>print</Label>
      </Block>
      <Block $bg={PINK} $w={203} $h={43} $top={8} $left={8}>
        <Tab color={PINK} top={8} />
        <VarField>geheimschrift</VarField>
      </Block>
    </Row>
  </Canvas>
);

const categories = [
  ['Logic', '#5b80a5'],
  ['Loops', LOOP],
  ['Math', MATH],
  ['Text', TEXTC],
  ['Lists', PURPLE],
  ['Colour', '#a5745b']
];

const App = () => (
  <Screen>
    <GlobalStyle />
    <MenuBar>
      <MenuLeft>
        <svg width="24" height="30" viewBox="0 0 24 30">
          <path d="M17 1 C17 4 14 7 11.5 7 C11 4 14 1 17 1 Z M12 8.5 C14 8.5 15.5 7.5 17.5 7.5 C19.5 7.5 21.5 8.5 22.5 10.5 C19.5 12.5 19.5 17.5 23 19 C22 22 19.5 27 17 27 C15.2 27 14.5 26 12.5 26 C10.5 26 9.5 27 8 27 C5 27 1 20.5 1 15.5 C1 10.5 4.2 8 7 8 C9 8 10.5 8.5 12 8.5 Z" fill="#fff" />
        </svg>
        <MenuItem $bold>Chrome</MenuItem>
        <MenuItem>Archief</MenuItem>
        <MenuItem>Bewerken</MenuItem>
        <MenuItem>Weergave</MenuItem>
        <MenuItem>Geschiedenis</MenuItem>
        <MenuItem>Bladwijzers</MenuItem>
        <MenuItem>Personen</MenuItem>
        <MenuItem>Venster</MenuItem>
        <MenuItem>Help</MenuItem>
      </MenuLeft>
      <MenuRight>
        <MenuSlot $w={40} $ml={12}>
          <svg width="36" height="34" viewBox="0 0 36 34">
            <path d="M18 0 L35 8 V26 L18 34 L1 26 V8 Z" fill="#fff" />
            <path d="M18 2 L33 9 L18 16 L3 9 Z" fill="#6f77ee" />
            <path d="M3 14 L18 21 L33 14 V18 L18 25 L3 18 Z" fill="#6f77ee" />
            <path d="M3 22 L18 28 L33 22 V25 L18 32 L3 25 Z" fill="#6f77ee" />
          </svg>
        </MenuSlot>
        <MenuSlot $w={40} $ml={22}>
          <svg width="36" height="32" viewBox="0 0 36 32">
            <path d="M7 22 H1.5 V1.5 H34.5 V22 H29" fill="none" stroke="#fff" strokeWidth="2.4" />
            <path d="M18 11 L30 31 H6 Z" fill="#fff" />
          </svg>
        </MenuSlot>
        <MenuSlot $w={40} $ml={30}>
          <svg width="38" height="34" viewBox="0 0 38 34">
            <path d="M8 17 A15 15 0 1 1 13 28" fill="none" stroke="#fff" strokeWidth="2" />
            <path d="M2 14 H14 L8 23 Z" fill="#fff" />
            <path d="M22 8 V18 L28 23" fill="none" stroke="#fff" strokeWidth="2" />
          </svg>
        </MenuSlot>
        <MenuSlot $w={40} $ml={32}><Bluetooth size={32} strokeWidth={1.8} /></MenuSlot>
        <MenuSlot $w={40} $ml={18}><Wifi size={36} strokeWidth={2.4} /></MenuSlot>
        <MenuSlot $w={20} $ml={21}>
          <svg width="16" height="26" viewBox="0 0 16 26"><path d="M1 8 H6 L15 1 V25 L6 18 H1 Z" fill="#fff" /></svg>
        </MenuSlot>
        <MenuItem $ml={43} $size={25}>35%</MenuItem>
        <MenuSlot $w={46} $ml={9}>
          <svg width="46" height="26" viewBox="0 0 46 26">
            <rect x="1.5" y="1.5" width="39" height="23" rx="4" fill="none" stroke="#fff" strokeWidth="2" />
            <rect x="4.5" y="4.5" width="13" height="17" rx="1" fill="#fff" />
            <path d="M43 9 C45 10 45 16 43 17 Z" fill="#fff" />
          </svg>
        </MenuSlot>
        <MenuItem $ml={37}>Wo 11:48</MenuItem>
        <MenuItem $ml={31}>Beheerder</MenuItem>
        <MenuSlot $w={40} $ml={29}><Search size={34} strokeWidth={2} /></MenuSlot>
        <MenuSlot $w={36} $ml={30}>
          <svg width="32" height="32" viewBox="0 0 32 32">
            <defs>
              <linearGradient id="siri" x1="0" y1="0" x2="1" y2="1">
                <stop offset="0" stopColor="#3ad0e0" />
                <stop offset="0.5" stopColor="#6a5cf0" />
                <stop offset="1" stopColor="#f04aa0" />
              </linearGradient>
            </defs>
            <circle cx="16" cy="16" r="15" fill="url(#siri)" stroke="#ddd" strokeWidth="1.5" />
            <path d="M4 16 L28 16 M16 6 L16 26 M8 8 L24 24 M24 8 L8 24" stroke="#fff" strokeWidth="1.5" opacity="0.8" />
          </svg>
        </MenuSlot>
        <MenuSlot $w={40} $ml={15}>
          <svg width="36" height="26" viewBox="0 0 36 26">
            <path d="M0 4 H5 M0 13 H5 M0 22 H5 M10 4 H36 M10 13 H30 M10 22 H36" stroke="#fff" strokeWidth="4" />
          </svg>
        </MenuSlot>
      </MenuRight>
    </MenuBar>

    <Window>
      <TabStrip>
        <Lights><Light /><Light /><Light /></Lights>
        <ChromeTab $w={478} $pr={22} $sep>
          <Favicon /><TabTitle>Assignment</TabTitle><X className="close" size={20} strokeWidth={2.2} />
        </ChromeTab>
        <ChromeTab $w={477} $pr={21}>
          <Favicon /><TabTitle>Assignment</TabTitle><X className="close" size={20} strokeWidth={2.2} />
        </ChromeTab>
        <ChromeTab $w={480} $pr={22} $active>
          <Favicon /><TabTitle>Codeniacs Code</TabTitle><X className="close" size={20} strokeWidth={2.2} />
        </ChromeTab>
        <NewTab><Plus size={32} strokeWidth={2.4} /></NewTab>
      </TabStrip>

      <Toolbar>
        <NavSlot><ArrowLeft size={34} strokeWidth={1.9} /></NavSlot>
        <NavSlot><ArrowRight size={34} strokeWidth={1.9} /></NavSlot>
        <NavSlot><RotateCw size={30} strokeWidth={2} /></NavSlot>
        <NavSlot><Home size={30} strokeWidth={2} /></NavSlot>
        <Omnibox>
          <Lock size={21} fill="#5f6368" strokeWidth={2.5} />
          <Url><span>https://</span>code.codeniacs.nl</Url>
          <Star size={32} strokeWidth={2} style={{ marginLeft: 'auto' }} />
        </Omnibox>
        {Extensions.map((ext, i) => (
          <NavSlot key={i} $ml={i === 0 ? 17 : 0}>{ext}</NavSlot>
        ))}
        <ToolDivider />
        <NavSlot $w={40} $ml={12}>
          <svg width="40" height="42" viewBox="0 0 40 42">
            <ellipse cx="20" cy="21" rx="19" ry="20" fill="#dedede" />
            <path d="M14 8 C24 4 30 10 27 20 C25 26 26 30 25 37 H16 C18 30 17 24 14 20 C12 16 12 11 14 8 Z" fill="#f0882c" />
          </svg>
        </NavSlot>
        <NavSlot $w={16} $ml={49}>
          <svg width="8" height="32" viewBox="0 0 8 32"><circle cx="4" cy="4" r="3.2" fill="#5f6368" /><circle cx="4" cy="16" r="3.2" fill="#5f6368" /><circle cx="4" cy="28" r="3.2" fill="#5f6368" /></svg>
        </NavSlot>
      </Toolbar>

      <Bookmarks>
        <AppsGrid />
        <Mark $ml={19}>Apps</Mark>
        <Mark $ml={38}>
          <svg width="20" height="28" viewBox="0 0 20 28"><path d="M1 1 H13 L19 8 V27 H1 Z M13 1 V8 H19" fill="none" stroke="#5f6368" strokeWidth="2" /></svg>
        </Mark>
        <Mark $ml={23} $ls={-0.45}>API W3C Markup ...</Mark>
        <Mark $ml={47}>
          <svg width="24" height="24" viewBox="0 0 24 24"><path d="M9 3 L2 12 L9 21" fill="none" stroke="#4285f4" strokeWidth="4" /><path d="M15 3 L22 12 L15 21" fill="none" stroke="#34a853" strokeWidth="4" /><path d="M9 3 L13 3" stroke="#fbbc05" strokeWidth="4" /></svg>
        </Mark>
        <Mark $ml={20} $ls={-0.2}>Blockly  |  Google ...</Mark>
        <EdxMark $ml={35} $ls={-2}><span>ed</span><span>X</span></EdxMark>
        <Mark $ml={915}>
          <svg width="30" height="32" viewBox="0 0 30 32"><path d="M15 1 A14 14 0 1 1 8 27 L1 31 L3 23 A14 14 0 0 1 15 1 Z" fill="#25c262" /><path d="M9 8 L13 8 L14 14 L12 16 C13 19 15 21 18 22 L20 19 L26 21 L24 26 C15 26 8 18 9 8 Z" fill="#fff" transform="translate(2 0) scale(0.9)" /></svg>
        </Mark>
        <Mark $ml={16}>WhatsApp</Mark>
        <MarkDivider />
        <Mark $ml={22}>
          <svg width="32" height="26" viewBox="0 0 32 26"><path d="M1 25 V1 H12 L15 5 H31 V25 Z" fill="#c8c9ca" stroke="#5f6368" strokeWidth="2" /><path d="M1 9 H31" stroke="#5f6368" strokeWidth="2" /></svg>
        </Mark>
        <Mark $ml={17}>Andere bladwijzers</Mark>
      </Bookmarks>

      <SiteHeader>
        <HeaderTop>
          <SiteLogo />
          <Crumb>&gt; Code</Crumb>
          <Select>
            English
            <SelectArrow>
              <svg width="16" height="26" viewBox="0 0 16 26"><path d="M2 9 L8 3 L14 9 M2 17 L8 23 L14 17" fill="none" stroke="#fff" strokeWidth="2.5" /></svg>
            </SelectArrow>
          </Select>
        </HeaderTop>
        <TabRow>
          <PageTab $w={217} $active>Blocks</PageTab>
          <PageTab $w={203}>JavaScript</PageTab>
          <PageTab $w={161}>Python</PageTab>
          <PageTab $w={131}>PHP</PageTab>
          <PageTab $w={120}>Lua</PageTab>
          <Actions>
            <ActionButton>
              <svg width="26" height="32" viewBox="0 0 26 32"><path d="M1 3 H8 L10 0.5 H16 L18 3 H25 V6 H1 Z M3 8 H23 V29 a2 2 0 0 1 -2 2 H5 a2 2 0 0 1 -2 -2 Z" fill="#0e4460" /></svg>
            </ActionButton>
            <ActionButton>
              <svg width="32" height="32" viewBox="0 0 32 32"><path d="M2 0 H24 L32 8 V29 a3 3 0 0 1 -3 3 H3 a3 3 0 0 1 -3 -3 V2 a2 2 0 0 1 2 -2 Z" fill="#000" /><path d="M4 8 V5 H24 V6 H5 V8 Z" fill="#2d8fbf" /></svg>
            </ActionButton>
            <ActionButton $focus $w={85}>
              <svg width="26" height="32" viewBox="0 0 26 32"><path d="M1 1 L25 16 L1 31 Z" fill="#f2faff" /></svg>
            </ActionButton>
          </Actions>
        </TabRow>
      </SiteHeader>

      <Workspace>
        <Grid />
        <Flyout>
          {categories.map(([name, color]) => (
            <Category key={name} $color={color}>{name}</Category>
          ))}
          <CategorySep />
          <Category $color={PINK}>Variables</Category>
          <Category $color="#995ba5">Functions</Category>
        </Flyout>
        <BlockStack />
        <Controls width="100" height="400" viewBox="0 0 100 400">
          <g fill="none" stroke="#ccc" strokeWidth="3">
            <circle cx="63" cy="37" r="24" />
            <path d="M63 7 V13 M63 61 V67 M33 37 H39 M87 37 H93" />
            <circle cx="63" cy="123" r="31" />
            <path d="M49 123 H77 M63 109 V137" />
            <circle cx="63" cy="191" r="31" />
            <path d="M49 191 H77" />
          </g>
          <circle cx="63" cy="37" r="8" fill="#ccc" />
          <path d="M5 283 H27 L33 277 H57 L63 283 H89 V295 H5 Z M11 301 H83 V376 a9 9 0 0 1 -9 9 H20 a9 9 0 0 1 -9 -9 Z" fill="#ccc" />
        </Controls>
        <ThumbV />
        <ThumbH />
      </Workspace>
    </Window>

    <Dock>
      {dockApps.map((app, i) =>
        app.divider ? (
          <DockDivider key={i} $ml={app.divider.ml} $mr={app.divider.mr} />
        ) : (
          <DockSlot key={i} $running={app.running}>{app.icon}</DockSlot>
        )
      )}
    </Dock>

    <Dialog>
      <DialogTitle>code.codeniacs.nl meldt het volgende</DialogTitle>
      <DialogText>te coderen text</DialogText>
      <DialogInput>Codeniacs Geheimschrift</DialogInput>
      <DialogButtons>
        <DialogButton $w={181}>Annuleren</DialogButton>
        <DialogButton $w={182} $primary>OK</DialogButton>
      </DialogButtons>
    </Dialog>
  </Screen>
);

export default App;
